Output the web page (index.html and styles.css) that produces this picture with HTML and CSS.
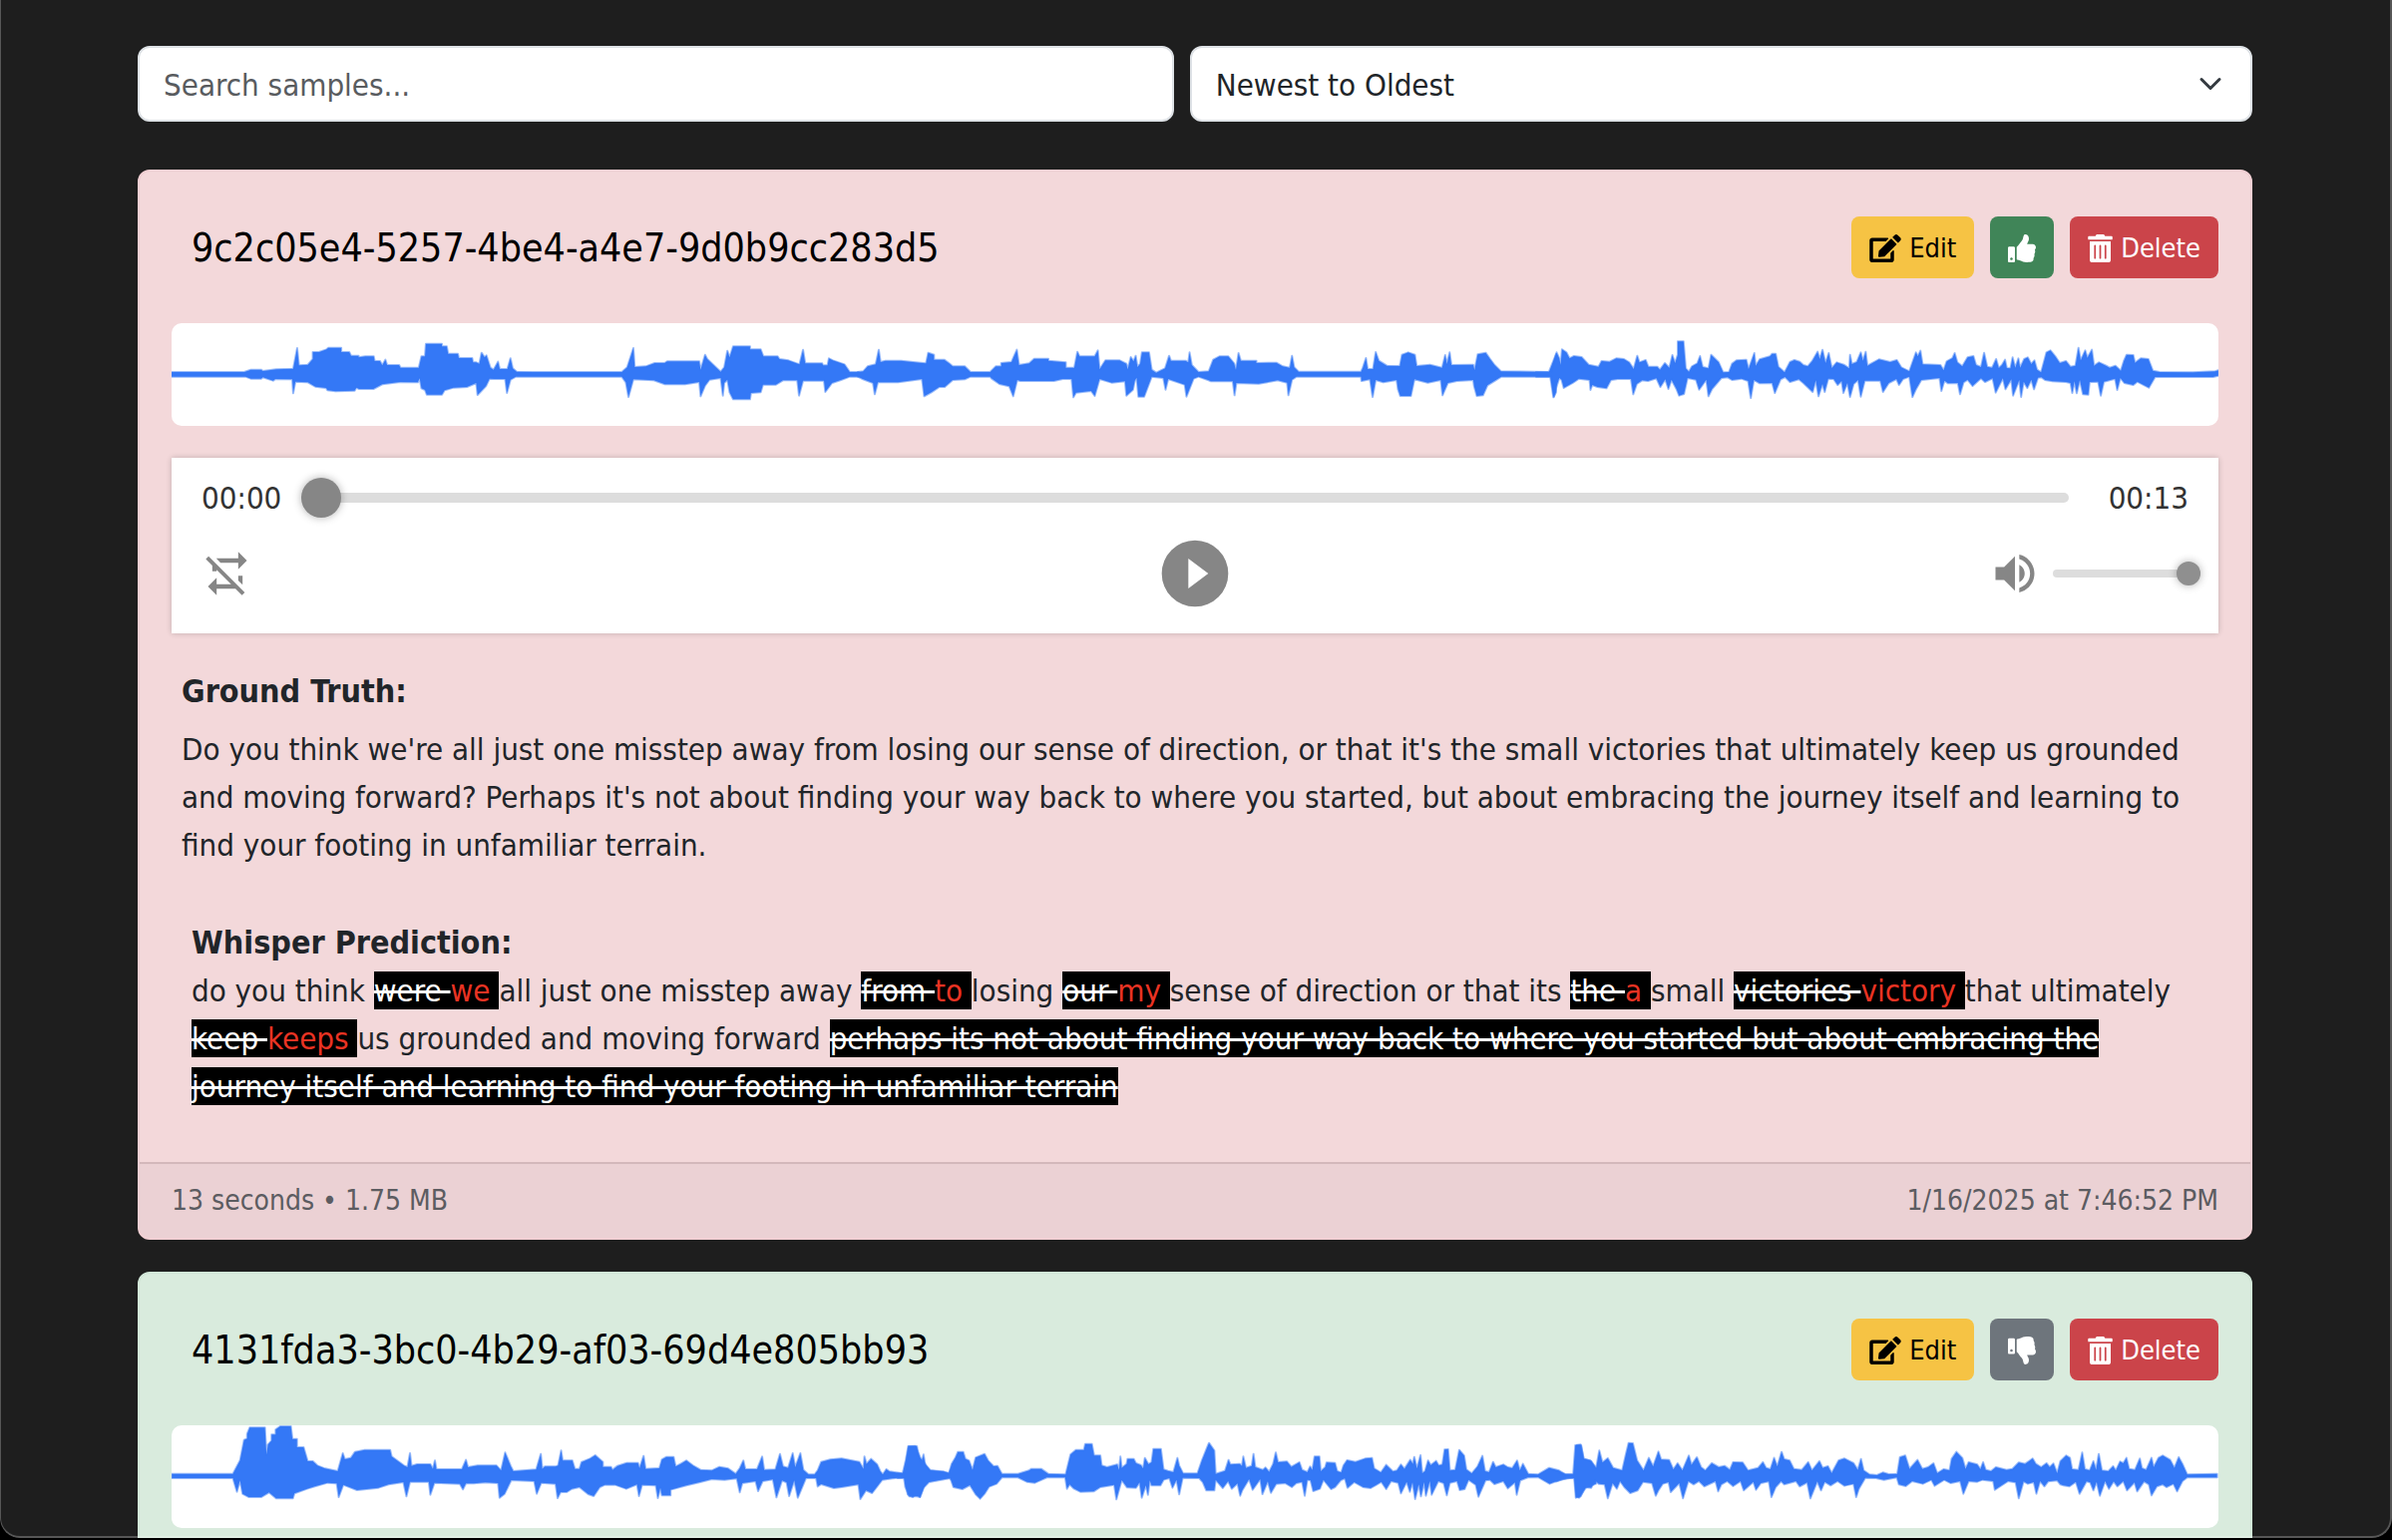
FILE: index.html
```html
<!DOCTYPE html>
<html lang="en">
<head>
<meta charset="utf-8">
<meta name="viewport" content="width=device-width, initial-scale=1">
<title>Samples</title>
<link rel="stylesheet" href="styles.css">
</head>
<body>
<svg class="symbols" aria-hidden="true">
  <symbol id="edit" viewBox="0 0 576 512"><path d="M402.6 83.2l90.2 90.2c3.8 3.8 3.8 10 0 13.8L274.4 405.6l-92.8 10.3c-12.4 1.4-22.9-9.1-21.5-21.5l10.3-92.8L388.8 83.2c3.8-3.8 10-3.8 13.8 0zm162-22.9l-48.8-48.8c-15.2-15.2-39.9-15.2-55.2 0l-35.4 35.4c-3.8 3.8-3.8 10 0 13.8l90.2 90.2c3.8 3.8 10 3.8 13.8 0l35.4-35.4c15.2-15.3 15.2-40 0-55.2zM384 346.2V448H64V128h229.8c3.2 0 6.2-1.3 8.5-3.5l40-40c7.6-7.6 2.2-20.5-8.5-20.5H48C21.5 64 0 85.5 0 112v352c0 26.5 21.5 48 48 48h352c26.5 0 48-21.5 48-48V306.2c0-10.7-12.9-16-20.5-8.5l-40 40c-2.2 2.3-3.5 5.3-3.5 8.5z"/></symbol>
  <symbol id="thumbs-up" viewBox="0 0 512 512"><path d="M104 224H24c-13.255 0-24 10.745-24 24v240c0 13.255 10.745 24 24 24h80c13.255 0 24-10.745 24-24V248c0-13.255-10.745-24-24-24zM64 472c-13.255 0-24-10.745-24-24s10.745-24 24-24 24 10.745 24 24-10.745 24-24 24zM384 81.452c0 42.416-25.97 66.208-33.277 94.548h101.723c33.397 0 59.397 27.746 59.553 58.098.084 17.938-7.546 37.249-19.439 49.197l-.11.11c9.836 23.337 8.237 56.037-9.308 79.469 8.681 25.895-.069 57.704-16.382 74.757 4.298 17.598 2.244 32.575-6.148 44.632C440.202 511.587 389.616 512 346.839 512l-2.845-.001c-48.287-.017-87.806-17.598-119.56-31.725-15.957-7.099-36.821-15.887-52.651-16.178-6.54-.12-11.783-5.457-11.783-11.998v-213.77c0-3.2 1.282-6.271 3.558-8.521 39.614-39.144 56.648-80.587 89.117-113.111 14.804-14.832 20.188-37.236 25.393-58.902C282.515 39.293 291.817 0 312 0c24 0 72 8 72 81.452z"/></symbol>
  <symbol id="thumbs-down" viewBox="0 0 512 512"><path d="M0 56v240c0 13.255 10.745 24 24 24h80c13.255 0 24-10.745 24-24V56c0-13.255-10.745-24-24-24H24C10.745 32 0 42.745 0 56zm40 200c0-13.255 10.745-24 24-24s24 10.745 24 24-10.745 24-24 24-24-10.745-24-24zm272 256c-20.183 0-29.485-39.293-33.931-57.795-5.206-21.666-10.589-44.07-25.393-58.902-32.469-32.524-49.503-73.967-89.117-113.111a11.98 11.98 0 0 1-3.558-8.521V59.901c0-6.541 5.243-11.878 11.783-11.998 15.831-.29 36.694-9.079 52.651-16.178C256.189 17.598 295.709.017 343.995 0h2.844c42.777 0 93.363.413 113.774 29.737 8.392 12.057 10.446 27.034 6.148 44.632 16.312 17.053 25.063 48.863 16.382 74.757 17.544 23.432 19.143 56.132 9.308 79.469l.11.11c11.893 11.949 19.523 31.259 19.439 49.197-.156 30.352-26.157 58.098-59.553 58.098H350.723C358.03 364.34 384 388.132 384 430.548 384 504 336 512 312 512z"/></symbol>
  <symbol id="trash" viewBox="0 0 448 512"><path d="M32 464a48 48 0 0 0 48 48h288a48 48 0 0 0 48-48V128H32zm272-256a16 16 0 0 1 32 0v224a16 16 0 0 1-32 0zm-96 0a16 16 0 0 1 32 0v224a16 16 0 0 1-32 0zm-96 0a16 16 0 0 1 32 0v224a16 16 0 0 1-32 0zM432 32H312l-9.4-18.7A24 24 0 0 0 281.1 0H166.8a23.72 23.72 0 0 0-21.4 13.3L136 32H16A16 16 0 0 0 0 48v32a16 16 0 0 0 16 16h416a16 16 0 0 0 16-16V48a16 16 0 0 0-16-16z"/></symbol>
  <symbol id="repeat-off" viewBox="0 0 24 24"><path d="M2 5.27L3.28 4L20 20.72L18.73 22l-3-3H7v3l-4-4l4-4v3h6.73L7 10.27V11H5V8.27L2 5.27M17 13h2v4.18l-2-2V13m0-8V2l4 4l-4 4V7H8.82l-2-2H17z"/></symbol>
  <symbol id="play" viewBox="0 0 24 24"><path d="M10 16.5v-9l6 4.5M12 2A10 10 0 0 0 2 12a10 10 0 0 0 10 10a10 10 0 0 0 10-10A10 10 0 0 0 12 2z"/></symbol>
  <symbol id="volume" viewBox="0 0 24 24"><path d="M14 3.23v2.06c2.89.86 5 3.54 5 6.71s-2.11 5.84-5 6.7v2.07c4-.91 7-4.49 7-8.77s-3-7.86-7-8.77M16.5 12c0-1.77-1-3.29-2.5-4.03V16c1.5-.71 2.5-2.24 2.5-4M3 9v6h4l5 5V4L7 9H3z"/></symbol>
</svg>

<div class="window">
<main class="container">
  <form class="filters">
    <input class="field search" type="text" placeholder="Search samples..." aria-label="Search samples">
    <select class="field sort" aria-label="Sort order">
      <option>Newest to Oldest</option>
    </select>
  </form>

  <article class="card card-danger">
    <div class="card-body">
      <header class="card-header">
        <h5 class="card-title">9c2c05e4-5257-4be4-a4e7-9d0b9cc283d5</h5>
        <div class="actions">
          <button class="btn btn-warning" type="button"><svg class="icon icon-wide"><use href="#edit"/></svg>Edit</button>
          <button class="btn btn-success" type="button" aria-label="Approve"><svg class="icon"><use href="#thumbs-up"/></svg></button>
          <button class="btn btn-delete" type="button"><svg class="icon icon-narrow"><use href="#trash"/></svg>Delete</button>
        </div>
      </header>

      <svg class="wave" viewBox="0 0 2052 103" preserveAspectRatio="none" role="img" aria-label="Waveform">
        <g transform="translate(-12 -14) scale(.4464 .3333)">
          <path d="M27 189H190L205 182H228L232 186L262 181L300 179L309 117L313 169L333 167L344 150V129H358L375 121L379 116H408V129H426L430 140H447V145L462 142H481L483 156H495L500 169L507 152L511 168H538L541 176H582L588 142H596L598 104H634V112H645L648 134H670L672 147H702L704 160H711L718 164L723 131L730 145L734 139L743 176L750 182L760 158L764 180H781L788 148L793 178L802 188L840 189H1038L1050 175L1064 117L1067 174L1092 172L1112 162H1134L1140 157H1212L1215 182L1225 137L1230 150L1244 168L1260 188L1268 175L1275 125L1280 145L1288 112H1326V121H1350L1356 142H1388L1392 150L1412 154L1437 166L1445 122L1450 163H1488L1490 169H1500L1503 148L1512 154L1538 166L1550 189H1570V203H1550L1530 213L1510 222L1495 249L1492 215H1445L1436 260L1432 214H1400L1384 227H1355L1350 250L1328 252L1326 271H1288L1280 250L1275 212L1268 222L1265 260L1260 207L1235 212L1225 230L1215 262L1212 219L1180 226H1135L1110 214L1064 211L1053 264L1047 220L1038 203H800L788 212L780 252L776 210H752L741 209L733 231L714 258L711 222L690 234L660 236L640 244L634 257H600L596 243L588 238L584 208L580 220L540 219L500 226L480 240H448L442 236L438 245L395 247L377 244L374 237L350 233L333 220L305 218L300 253L298 211L260 210L255 215L232 205L228 209H205L193 203H27Z"/>
        </g>
        <g transform="translate(688 -14) scale(.4464 .3333)">
          <path d="M0 189L12 187L22 172L40 166L47 122L51 159L62 155H97L140 161L153 163L158 131L171 137V152H194L205 163L213 172H240L253 189H297L310 172H322V162L345 159L357 122L362 168L385 163L396 149H428V155L467 160V176H486L493 128L498 142H532L539 124L543 181L556 154H588L603 164L606 181L613 144L619 157L624 140L628 174L634 164L638 130H654L660 182L670 191L690 178L699 140L703 155H736L742 160L745 130L750 168L765 189L788 187L798 152L812 142H832L845 163L849 182L855 132L860 155H895V162L940 161L954 172L970 176L975 140L980 175L990 188H1130L1134 176L1141 147L1145 180H1157L1163 129L1170 155L1188 170L1217 171L1222 137L1236 130L1251 137L1255 171L1285 167L1312 176L1319 138L1323 165L1329 130L1333 168L1382 167L1385 183L1392 136L1410 131L1420 150L1430 168L1444 187L1552 189L1568 135V250L1562 265L1555 203H1445L1432 214L1414 229L1404 259L1390 261L1384 232L1382 213L1345 216L1325 222L1313 259L1309 213L1280 221L1250 211L1242 261H1218L1213 241L1210 213L1180 220L1163 213L1156 264L1150 211L1131 216L1130 203H985L975 212L967 259L964 221L943 214L900 224L850 222L846 259L842 217L793 217L788 214L765 203L754 209L738 263L734 227L697 210L691 242L686 207L660 203L643 263H630L626 206L622 215L618 242L603 260L600 217L570 221L543 210L532 261L524 246L490 251L484 265L480 210L460 210L440 216H365L358 213L349 262L340 232L318 225L300 208L297 203H253L240 211L213 213L195 234H183L165 250L149 262L144 210L90 220H45L38 256L34 222L12 211L0 203Z"/>
        </g>
        <g transform="translate(1368 -14) scale(.4464 .3333)">
          <path d="M0 189H34L46 130L52 148L55 167L58 121L68 130L75 148L85 141L102 144L118 167L140 173L147 156L165 158L180 148L197 150L209 160L219 180L227 140L232 160L246 153L252 173H272L278 182L289 162L299 176L306 138L312 162L318 137V97H331L336 178L343 188L350 172L362 163L368 141L374 174L387 178L393 137L410 160L420 190L433 189L440 164L450 154L472 152L477 180L490 132L493 170L502 151L525 142L530 134H538L544 173L558 190L570 159L580 153L592 158L600 168L610 172L620 156L632 128L637 150L643 122L650 162L657 132L664 177L675 160L691 167L703 178L705 137L709 165L720 159L729 130L734 155L740 128L744 170L770 151L795 159L810 153L820 175L838 187L853 130L857 142L863 125L868 166L908 168L915 184L922 157L935 147L940 132L946 160L957 172L969 145L982 141L988 168L999 174L1006 131L1013 173L1024 176L1033 150L1039 177L1046 168L1053 152L1057 177L1065 178L1070 145L1076 176L1083 148L1087 176L1096 150L1104 145L1112 165L1119 154L1125 182L1134 190L1146 130L1155 124L1167 144L1176 162L1190 156L1200 173L1211 170L1218 116L1223 154L1233 124L1238 146L1248 122L1253 170L1264 160L1280 170L1288 176L1301 170L1313 185L1320 155L1326 137L1341 138L1345 161L1358 148L1375 150L1385 185L1400 189L1475 190L1525 187L1532 184V200L1520 204H1390L1376 236L1350 218L1341 228L1321 222L1312 207L1305 243L1300 209L1275 218L1268 260L1262 218L1243 219L1240 257L1228 256L1221 213L1214 253L1209 217L1204 252L1200 222L1190 219L1160 217L1143 213L1135 205L1127 206L1118 241L1112 212L1103 237L1095 218L1089 264L1085 213L1071 260L1067 211L1054 241L1048 208L1032 251L1025 208L1008 219L999 208L980 231L969 212L960 220L952 256L947 222L925 223L917 215L910 246L906 207L865 213L853 241L845 264L838 203L824 210L815 228L809 210L792 222L779 249L773 215L738 215L729 263L723 213L713 225L705 264L699 222L690 252L686 216L677 228L668 210L656 209L648 249L643 225L634 262L628 214L621 249L610 235L600 222L590 211L570 219L559 204L549 211L536 252L530 222L502 223L489 213L482 267L476 216L461 209L440 213L430 205L416 207L395 240L387 262L382 212L366 242L359 212L340 207L332 255L321 260L315 240L304 212L297 240L290 211L279 234L270 208L251 216L238 214L226 225L218 256L213 210L183 210L168 213L158 238L138 234L126 228L122 243L120 213L96 209L82 222L62 237L57 212L52 207L46 232L40 263L34 203H0Z"/>
        </g>
      </svg>

      <section class="player" aria-label="Audio player">
        <div class="progress-row">
          <span>00:00</span>
          <input class="range progress" type="range" min="0" max="13" value="0" aria-label="Position">
          <span>00:13</span>
        </div>
        <div class="controls">
          <button class="player-btn loop" type="button" aria-label="Enable loop"><svg><use href="#repeat-off"/></svg></button>
          <button class="player-btn play" type="button" aria-label="Play"><svg><use href="#play"/></svg></button>
          <div class="volume">
            <button class="player-btn" type="button" aria-label="Mute"><svg><use href="#volume"/></svg></button>
            <input class="range level" type="range" min="0" max="100" value="100" aria-label="Volume">
          </div>
        </div>
      </section>

      <section class="truth">
        <h6 class="label">Ground Truth:</h6>
        <p>Do you think we're all just one misstep away from losing our sense of direction, or that it's the small victories that ultimately keep us grounded and moving forward? Perhaps it's not about finding your way back to where you started, but about embracing the journey itself and learning to find your footing in unfamiliar terrain.</p>
      </section>

      <section class="prediction">
        <h6 class="label">Whisper Prediction:</h6>
        <p>do you think <span class="diff"><del>were </del><ins>we </ins></span>all just one misstep away <span class="diff"><del>from </del><ins>to </ins></span>losing <span class="diff"><del>our </del><ins>my </ins></span>sense of direction or that its <span class="diff"><del>the </del><ins>a </ins></span>small <span class="diff"><del>victories </del><ins>victory </ins></span>that ultimately <span class="diff"><del>keep </del><ins>keeps </ins></span>us grounded and moving forward <span class="diff"><del>perhaps its not about finding your way back to where you started but about embracing the journey itself and learning to find your footing in unfamiliar terrain</del></span></p>
      </section>
    </div>
    <footer class="card-footer">
      <span>13 seconds • 1.75 MB</span>
      <time>1/16/2025 at 7:46:52 PM</time>
    </footer>
  </article>

  <article class="card card-success">
    <div class="card-body">
      <header class="card-header">
        <h5 class="card-title">4131fda3-3bc0-4b29-af03-69d4e805bb93</h5>
        <div class="actions">
          <button class="btn btn-warning" type="button"><svg class="icon icon-wide"><use href="#edit"/></svg>Edit</button>
          <button class="btn btn-secondary" type="button" aria-label="Reject"><svg class="icon"><use href="#thumbs-down"/></svg></button>
          <button class="btn btn-delete" type="button"><svg class="icon icon-narrow"><use href="#trash"/></svg>Delete</button>
        </div>
      </header>

      <svg class="wave" viewBox="0 0 2052 103" preserveAspectRatio="none" role="img" aria-label="Waveform">
        <g transform="translate(-12 -28) scale(.5102 .3333)">
          <path d="M24 230H144L158 190L166 128L172 124V110L177 91H207L210 172L213 142L220 130V112H228V97L237 87H258L261 125H270V150H283L291 192H301L310 205L325 214L350 222L360 168L364 186L376 182L384 164L403 158H453L456 178L480 205L487 210L492 168L495 206L506 201H532L537 215L541 190L544 216H594L602 188L606 210L625 205H662L671 220L679 166L690 207L695 222L740 217L749 170L752 215L757 208H778L783 205L789 160L792 190H811L816 215H825L829 195L846 184L856 174L871 194V209H887L890 218L900 206L918 197H940L943 213L951 176L955 215L982 213L987 187L996 179H1010L1014 208L1024 200L1035 190L1048 205L1063 218L1085 220L1100 209L1117 214L1132 230L1140 213L1147 190L1151 216H1174L1184 178L1188 218L1210 217L1219 170L1225 208L1235 212L1244 168L1249 210L1259 168L1265 218L1275 232H1287L1293 220L1300 194L1318 187L1340 184L1375 194L1383 215L1385 178L1389 200L1398 185L1410 202L1416 222L1421 232L1428 216L1434 223L1460 229L1466 190L1471 147L1485 146L1495 182L1505 202L1515 220L1551 228L1568 175V260L1551 241L1520 248L1505 254L1494 300L1490 283L1480 300L1470 292L1465 241L1440 244L1420 248L1400 288L1388 280L1377 306L1373 262L1340 270L1325 273L1300 261L1293 268L1290 243L1270 243L1254 302L1247 250L1237 297L1232 256L1223 250L1212 301L1205 247L1185 252L1176 282L1171 252L1145 258L1140 286L1134 244L1110 248L1085 246L1060 256L1035 265L1004 278V295H987L984 272L979 303L975 265L948 263L942 297L938 262L917 275L895 263L875 263L865 270L853 297L842 291L825 270L810 275L800 285H788L782 303L778 260L750 257L741 290L736 252L691 249L678 290L668 302L665 258L640 256L617 259H602L596 277L590 260L540 257L532 293L529 254H492L485 298L479 255L450 262L430 272L388 279L361 263L352 300L348 259L330 257L305 268L290 275L265 289L262 304H229L215 286L200 300H175L163 290L158 250L152 284L144 243H24Z"/>
        </g>
        <g transform="translate(728 -28) scale(.4464 .3333)">
          <path d="M0 229H14L20 190L25 147H43L47 180L53 200L58 172L62 205L71 220L103 223L115 229L121 200L130 180L135 164H147L152 185L160 190L168 218L175 181L195 170L203 190L215 207L224 206L234 230H270L295 220L300 215H322L338 230L377 232L388 172L400 158H418L421 140H436L441 175H455L458 205L470 210L493 202L497 218L500 178L503 212L514 200L516 185H530L535 198L546 204L551 214L555 182L563 201L570 195L574 155H591L597 217L607 221L619 225L628 182L632 205L641 229H673L683 190L695 150L699 137L711 160L714 230L735 221L743 188L747 202L768 200L773 206L776 178L782 212L795 206L799 170L803 210L820 218L826 211L834 224L843 200L849 166L854 195L874 193L884 209L902 195L908 218L920 225L926 208L931 218L936 178H947L950 222L960 210L963 196L982 197L987 222L996 226L1001 205L1009 189L1028 194L1050 184L1065 182L1070 214L1085 226L1097 203L1112 223L1121 220L1130 202L1138 215L1151 188L1157 200L1160 179L1166 214L1174 174L1178 228L1184 222L1191 190L1197 204L1209 191L1215 205L1223 202L1228 157L1236 156L1240 220L1252 218L1261 158L1272 175L1277 217L1289 229L1302 208L1313 176L1319 222L1328 225L1337 194L1343 210L1360 202L1370 210L1380 213L1391 190L1397 220L1404 200L1416 230L1438 232L1463 212L1485 220L1500 232L1520 232L1525 144L1535 145L1540 185L1555 190L1568 214V260L1545 272L1530 302L1524 298L1520 241L1490 247L1464 260L1438 240L1415 241L1398 250L1390 293L1386 256L1370 274L1360 252L1340 261L1330 248L1320 250L1304 299L1298 263L1282 248L1273 276L1262 279L1256 252L1240 257L1233 295L1226 258L1214 252L1199 293L1195 252L1186 296L1182 255L1175 298L1170 262L1162 306L1156 256L1150 284L1143 254L1130 289L1124 257L1108 252L1097 276L1086 254L1075 263L1062 273L1045 270L1025 255L1010 272L1004 244L995 249L982 270L973 276L956 248L948 275L933 282L927 250L920 248L914 296L908 254L895 258L885 270L870 258L850 260L838 287L831 253L819 291L814 246L797 278L789 246L774 279L769 296L763 259L750 275L742 252L730 273L714 248L711 280H693L685 255L677 243L640 242L632 292L626 248L617 272L610 243L597 248L590 265H570L566 250L562 293L557 265L548 302L543 256L535 272L515 271L503 249L491 307L486 263L455 270L440 283L410 284L395 274L386 262L380 275L376 241H335L308 257L290 254L270 241H234L222 260L205 269L195 290L185 305L175 292L162 264L145 276L125 270L118 243L103 247L70 255L58 272L50 300L43 298H26L17 270L14 243H0Z"/>
        </g>
        <g transform="translate(1388 -128) scale(.5344 .3333)">
          <path d="M0 525L18 532L32 532L36 444L46 442L52 485L66 492L75 513L81 460L87 496L97 483L107 512L124 520L131 470L136 437L144 438L152 490L164 520L174 482L182 508L192 463L197 487L212 488L220 517L228 498L237 520L249 475L254 503L264 480L272 510L280 520L292 498L305 510L316 506L326 518L332 495L350 496L360 520L379 512L388 495L394 512L402 516L409 482L415 508L423 464L428 486L438 490L446 515L461 518L473 495L480 520L494 492L500 512L510 507L517 528L530 490L541 484L558 498L566 518L572 485L577 520L588 532L602 534L613 526L624 531L640 530L645 480L655 475L663 515L678 488L687 515L698 510L708 498L715 528L727 516L738 520L742 485L751 464L762 482L768 515L774 495L790 502L796 516L801 495L806 518L816 522L825 510L845 518L856 515L868 496L880 500L894 484L900 500L910 510L920 498L926 510L933 499L940 528L946 492L957 475L964 482L968 516L980 518L987 466L992 516L1001 520L1008 492L1013 518L1018 470L1024 520L1036 522L1045 507L1050 520L1058 493L1064 498L1070 482L1075 515L1086 518L1095 484L1099 513L1107 518L1117 482L1121 510L1130 482L1138 475L1152 488L1160 512L1168 480L1175 500L1184 532L1240 530V541H1184L1175 552L1165 583L1158 560L1145 570L1138 562L1127 568L1117 595L1112 562L1103 553L1090 583L1085 556L1071 580L1064 552L1053 568L1046 553L1037 575L1030 552L1020 596L1014 554L1008 580L1002 556L995 553L982 590L975 554L963 568L952 565L946 562L940 550L923 553L916 568L908 552L901 590L896 555L885 560L877 553L868 604L862 556L848 552L823 578L820 552L800 548L790 554L774 552L764 590L758 552L740 558L728 548L710 566L704 548L688 560L668 552L656 567L643 562L639 541L615 548L600 543L580 542L568 575L563 600L558 560L541 566L528 552L515 565L504 554L497 580L490 553L477 604L471 556L457 568L450 552L428 562L422 552L412 570L404 600L399 553L384 558L375 578L370 554L352 580L346 552L332 567L321 552L310 562L304 583L299 552L278 568L268 552L258 562L248 552L238 604L231 558L215 585L211 555L200 560L192 580L187 596L180 558L163 554L153 580L139 588L128 570L120 552L114 575L106 558L97 604L91 562L80 560L73 550L66 572L54 570L46 598L37 602L34 543L20 543L0 553Z"/>
        </g>
      </svg>
    </div>
  </article>
</main>
</div>
</body>
</html>
```
FILE: styles.css
```css
* { box-sizing: border-box; }

body {
  margin: 0;
  background: #000;
  color: #212529;
  font-family: "DejaVu Sans Condensed", "DejaVu Sans", sans-serif;
  font-size: 31px;
  line-height: 48px;
}

h5, h6, p { margin: 0; }

.symbols {
  position: absolute;
  width: 0;
  height: 0;
}

svg { fill: currentColor; }

button, input, select {
  font: inherit;
  color: inherit;
}

/* Rounded window with a thin light edge */
.window {
  position: relative;
  height: calc(100vh - 2px);
  padding-right: 2px;
  overflow: hidden;
  background: #1e1e1e;
  border-radius: 0 0 20px 20px;
}

.window::after {
  content: "";
  position: absolute;
  inset: 0;
  border: solid rgba(255, 255, 255, .25);
  border-width: 0 2px 2px 1px;
  border-radius: 0 0 20px 20px;
  pointer-events: none;
}

.container {
  max-width: 2168px;
  margin: 0 auto;
  padding: 46px 24px 0;
}

.filters {
  display: flex;
  gap: 16px;
  margin-bottom: 48px;
}

.field {
  height: 76px;
  padding: 13px 24px 11px;
  border: 2px solid #dee2e6;
  border-radius: 12px;
  background: #fff;
}

.search { width: 49%; }

.search::placeholder {
  color: #595c5f;
  opacity: 1;
}

.sort {
  flex: 1;
  appearance: none;
  background: #fff url("data:image/svg+xml,%3Csvg xmlns='http://www.w3.org/2000/svg' viewBox='0 0 16 16'%3E%3Cpath fill='none' stroke='%23343a40' stroke-linecap='round' stroke-linejoin='round' stroke-width='2' d='m2 5 6 6 6-6'/%3E%3C/svg%3E") no-repeat right 24px center / 32px 24px;
}

.card {
  margin-bottom: 32px;
  border: 2px solid;
  border-radius: 12px;
  overflow: hidden;
}

.card-danger {
  background: #f3d8da;
  border-color: #f1cfd3;
}

.card-success {
  background: #d9ebdd;
  border-color: #d2e7d8;
}

.card-body { padding: 45px 32px 52px; }

.card-header {
  display: flex;
  align-items: center;
  justify-content: space-between;
  margin-bottom: 45px;
  padding-left: 20px;
}

.card-title {
  padding-top: 2px;
  color: #000;
  font-size: 39px;
  font-weight: 400;
}

.actions {
  display: flex;
  gap: 16px;
}

.btn {
  display: flex;
  align-items: center;
  gap: 8px;
  padding: 11px 18px 9px;
  border: 0;
  border-radius: 8px;
  color: #fff;
  font-size: 27px;
  line-height: 42px;
}

.btn-warning { background: #f6c344; color: #000; }
.btn-success { background: #408558; }
.btn-secondary { background: #6e757c; }
.btn-delete { background: #cb444a; }

.icon { width: 28px; height: 28px; }
.icon-wide { width: 32px; }
.icon-narrow { width: 25px; }

.wave {
  display: block;
  width: 100%;
  height: 103px;
  border-radius: 10px;
  background: #fff;
  color: #3478f6;
}

.wave path {
  stroke: currentColor;
  stroke-opacity: .5;
  stroke-width: 2px;
  stroke-linejoin: round;
  vector-effect: non-scaling-stroke;
}

.player {
  margin: 32px 0 34px;
  padding: 20px 30px;
  background: #fff;
  box-shadow: 0 0 6px rgba(0, 0, 0, .2);
}

.progress-row {
  display: flex;
  align-items: center;
  height: 40px;
  margin-bottom: 16px;
  color: #333;
}

.range {
  appearance: none;
  margin: 0;
  background: none;
}

.progress {
  flex: 1;
  min-width: 0;
  height: 40px;
  margin: 0 40px 0 20px;
}

.range::-webkit-slider-runnable-track {
  height: 10px;
  border-radius: 5px;
  background: #ddd;
}

.range::-webkit-slider-thumb {
  appearance: none;
  width: 40px;
  height: 40px;
  margin-top: -15px;
  border-radius: 50%;
  background: #868686;
  box-shadow: 0 0 8px rgba(0, 0, 0, .3);
}

.level {
  width: 148px;
  height: 24px;
}

.level::-webkit-slider-runnable-track { height: 8px; }

.level::-webkit-slider-thumb {
  width: 24px;
  height: 24px;
  margin-top: -8px;
  background: #8f8f8f;
}

.controls {
  display: grid;
  grid-template-columns: 1fr 80px 1fr;
  align-items: center;
}

.player-btn {
  width: 52px;
  height: 52px;
  padding: 0;
  border: 0;
  background: none;
  color: #868686;
}

.player-btn svg {
  display: block;
  width: 100%;
  height: 100%;
}

.play {
  width: 80px;
  height: 80px;
}

.volume {
  display: flex;
  align-items: center;
  justify-content: flex-end;
  gap: 12px;
  margin-right: -12px;
}

.label {
  font-size: 32px;
  font-weight: 700;
}

.truth {
  margin-bottom: 50px;
  padding: 0 10px;
}

.truth .label { margin-bottom: 10px; }

.prediction { padding: 0 20px; }

.diff {
  padding: 1px 0;
  background: #000;
}

.diff del {
  color: #fff;
  text-decoration-thickness: 3px;
}

.diff ins {
  color: #ea3323;
  text-decoration: none;
}

.card-footer {
  display: flex;
  justify-content: space-between;
  padding: 16px 32px;
  border-top: 2px solid #d3b7ba;
  background: #ebd1d4;
  color: #5c5c61;
  font-size: 28px;
  line-height: 42px;
}
```
